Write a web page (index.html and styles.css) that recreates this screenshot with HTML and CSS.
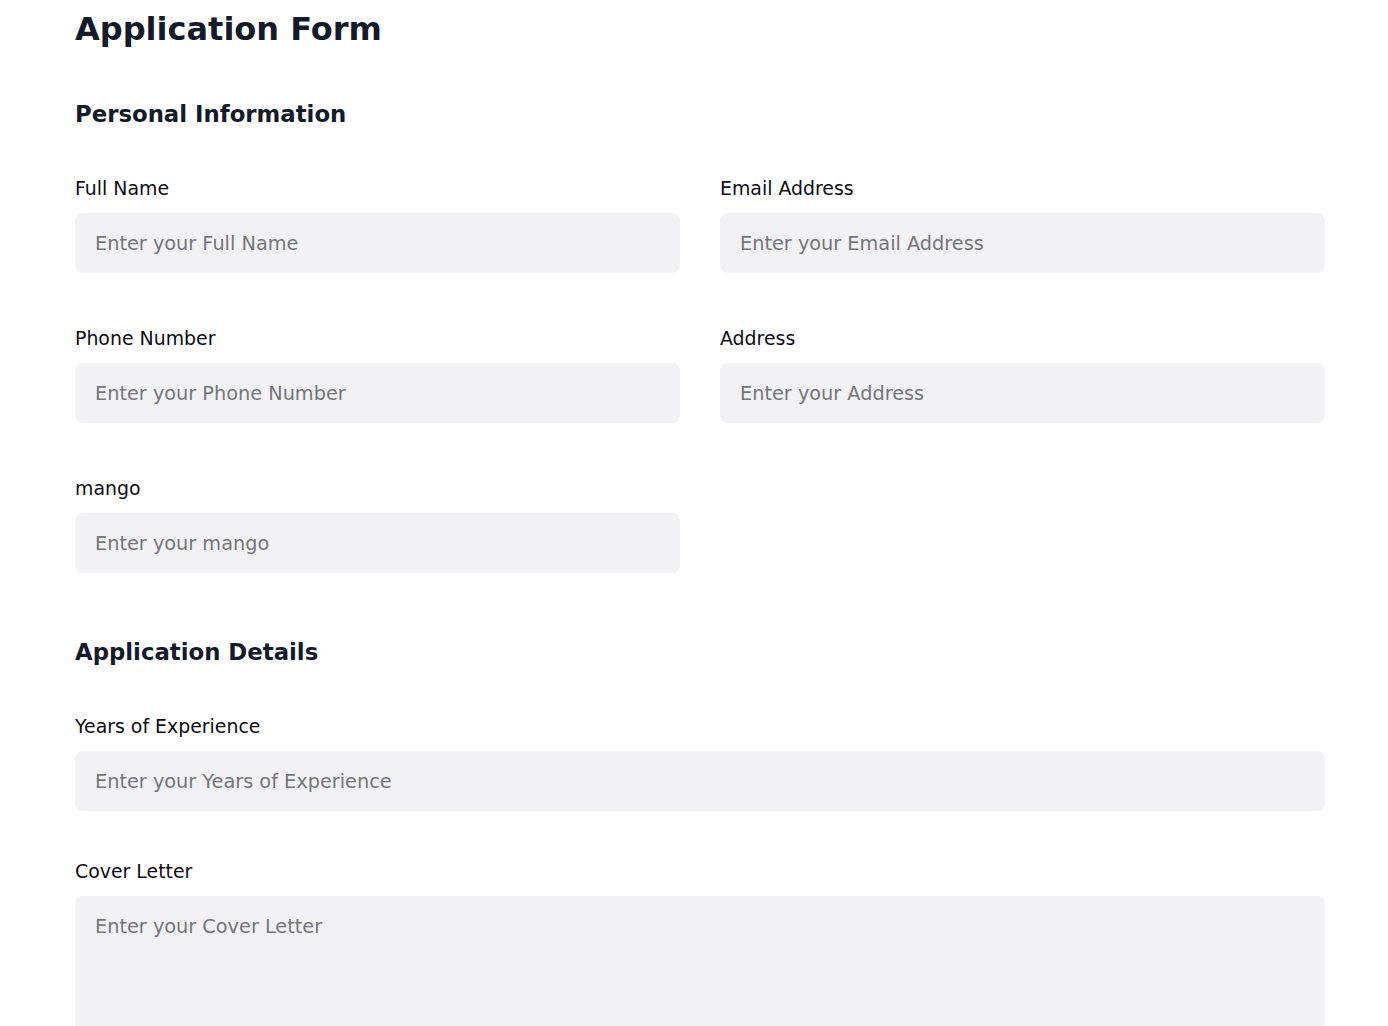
FILE: index.html
```html
<!DOCTYPE html>
<html lang="en">
<head>
<meta charset="utf-8">
<title>Application Form</title>
<link rel="stylesheet" href="styles.css">
</head>
<body>
<main class="page">
  <h1 class="title">Application Form</h1>

  <section class="section">
    <h2 class="section-title">Personal Information</h2>
    <div class="grid">
      <div class="field">
        <label class="label" for="fullname">Full Name</label>
        <input class="input" id="fullname" type="text" placeholder="Enter your Full Name">
      </div>
      <div class="field">
        <label class="label" for="email">Email Address</label>
        <input class="input" id="email" type="email" placeholder="Enter your Email Address">
      </div>
      <div class="field">
        <label class="label" for="phone">Phone Number</label>
        <input class="input" id="phone" type="text" placeholder="Enter your Phone Number">
      </div>
      <div class="field">
        <label class="label" for="address">Address</label>
        <input class="input" id="address" type="text" placeholder="Enter your Address">
      </div>
      <div class="field">
        <label class="label" for="mango">mango</label>
        <input class="input" id="mango" type="text" placeholder="Enter your mango">
      </div>
    </div>
  </section>

  <section class="section section-details">
    <h2 class="section-title">Application Details</h2>
    <div class="stack">
      <div class="field">
        <label class="label" for="years">Years of Experience</label>
        <input class="input" id="years" type="text" placeholder="Enter your Years of Experience">
      </div>
      <div class="field">
        <label class="label" for="cover">Cover Letter</label>
        <textarea class="input textarea" id="cover" placeholder="Enter your Cover Letter"></textarea>
      </div>
    </div>
  </section>
</main>
</body>
</html>
```
FILE: styles.css
```css
html, body {
  margin: 0;
  padding: 0;
  background: #ffffff;
}

body {
  font-family: "DejaVu Sans", "Noto Sans", sans-serif;
  color: #111111;
}

.page {
  width: 1250px;
  margin-left: 75px;
}

.title {
  margin: 9px 0 0;
  font-size: 32px;
  line-height: 40px;
  font-weight: 700;
  color: #131a2a;
  letter-spacing: 0;
}

.section-title {
  margin: 49px 0 0;
  font-size: 22.8px;
  line-height: 32px;
  font-weight: 700;
  color: #131a2a;
}

.section-details .section-title {
  margin-top: 63px;
}

.grid {
  margin-top: 47px;
  display: grid;
  grid-template-columns: 605px 605px;
  column-gap: 40px;
  row-gap: 54px;
}

.stack {
  margin-top: 47px;
  display: flex;
  flex-direction: column;
  gap: 49px;
}

.field {
  display: flex;
  flex-direction: column;
  gap: 13px;
}

.label {
  font-size: 18.9px;
  line-height: 23px;
  font-weight: 400;
  color: #0c0c14;
}

.input {
  box-sizing: border-box;
  width: 100%;
  height: 60px;
  margin: 0;
  padding: 0 20px;
  border: none;
  border-radius: 8px;
  background: #f2f2f4;
  font-family: "DejaVu Sans", "Noto Sans", sans-serif;
  font-size: 19.3px;
  line-height: 24px;
  color: #111111;
  outline: none;
}

.input::placeholder {
  color: #75757c;
  opacity: 1;
}

.textarea {
  display: block;
  height: 170px;
  padding: 19px 20px;
  resize: none;
}
```
